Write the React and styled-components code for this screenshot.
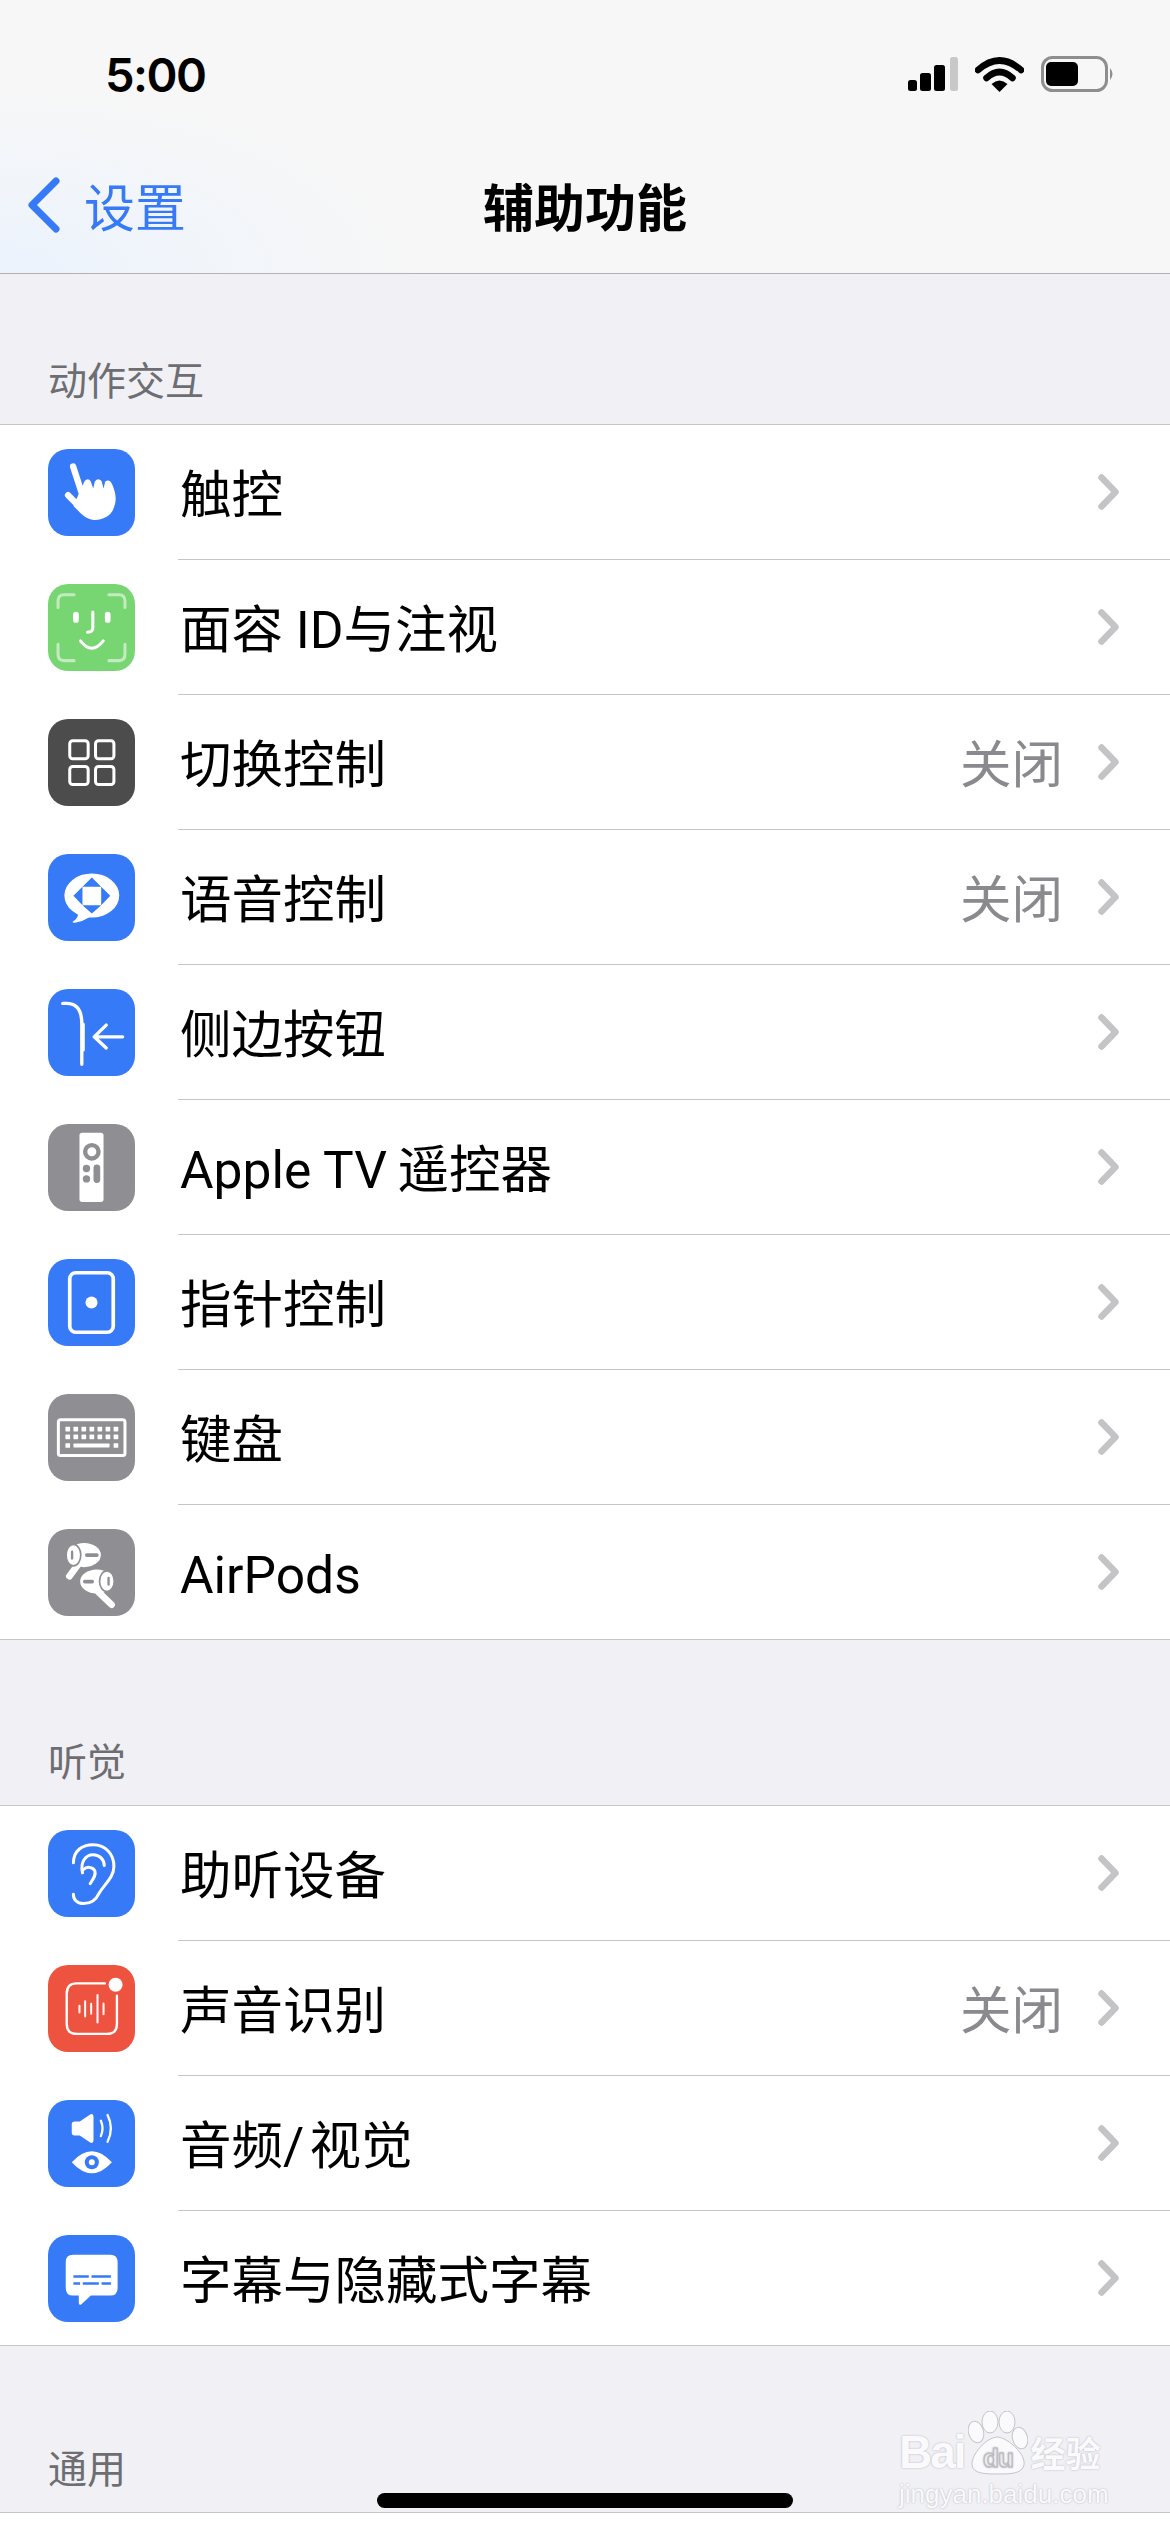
import React from "react";
import styled, { createGlobalStyle } from "styled-components";

const BLUE = "#377af7";
const GRAY = "#8e8e93";

const GlobalStyle = createGlobalStyle`
  html, body {
    margin: 0;
    padding: 0;
    background: #f0f0f5;
  }
  body {
    font-family: Roboto, "Noto Sans CJK SC", sans-serif;
  }
`;

const Page = styled.div`
  position: relative;
  width: 1170px;
  height: 2532px;
  overflow: hidden;
  background: #f0f0f5;
`;

const Header = styled.header`
  height: 273px;
  border-bottom: 1px solid #b2b2b2;
  background: radial-gradient(ellipse 420px 190px at 0 273px, #ecf3fd 0%, rgba(246, 247, 248, 0) 100%), #f7f7f7;
`;

const StatusBar = styled.div`
  height: 148px;
  padding: 0 56px 0 105px;
  display: flex;
  align-items: center;
  justify-content: space-between;
`;

const Time = styled.div`
  font-family: Inter, sans-serif;
  font-size: 47px;
  font-weight: 600;
  color: #000;
  letter-spacing: -1.5px;
`;

const StatusIcons = styled.div`
  display: flex;
  align-items: center;
  gap: 17px;
`;

const NavBar = styled.nav`
  height: 114px;
  display: grid;
  grid-template-columns: 1fr auto 1fr;
  align-items: center;
`;

const BackLink = styled.div`
  margin-left: 27px;
  display: flex;
  align-items: center;
  gap: 24px;
  color: ${BLUE};
  font-size: 51px;
`;

const Title = styled.h1`
  margin: 0;
  font-size: 51px;
  font-weight: 700;
  color: #000;
`;

const SectionHeader = styled.div`
  box-sizing: border-box;
  height: ${(p) => p.$height}px;
  padding: 0 48px 18px;
  display: flex;
  align-items: flex-end;
  font-size: 39px;
  line-height: 48px;
  color: #6d6d72;
`;

const Group = styled.section`
  background: #fff;
  border-top: 1px solid #c6c6c8;
  border-bottom: 1px solid #c6c6c8;
`;

const TailGroup = styled(Group)`
  height: 40px;
`;

const Row = styled.div`
  height: ${(p) => (p.$last ? 134 : 135)}px;
  box-sizing: border-box;
  padding-left: 48px;
  display: flex;
  align-items: center;
  gap: 45px;
`;

const IconTile = styled.div`
  flex: none;
  width: 87px;
  height: 87px;
  border-radius: 20px;
  background: ${(p) => p.$color};
  margin-bottom: ${(p) => (p.$last ? 0 : 1)}px;
  svg {
    display: block;
  }
`;

const RowBody = styled.div`
  flex: 1;
  height: 100%;
  box-sizing: border-box;
  margin-left: -2px;
  padding: 0 51px 0 1px;
  display: flex;
  align-items: center;
  border-bottom: ${(p) => (p.$last ? "none" : "1px solid #c6c6c8")};
`;

const Label = styled.div`
  flex: 1;
  padding: 7px 0 0 1px;
  font-size: 51.5px;
  line-height: 72px;
  color: #000;
  white-space: pre;
`;

const Value = styled.div`
  padding-top: 7px;
  font-size: 51.5px;
  line-height: 72px;
  color: #8a8a8e;
  margin-right: 35px;
`;

const HomeBar = styled.div`
  position: absolute;
  left: 377px;
  top: 2493px;
  width: 416px;
  height: 15px;
  border-radius: 8px;
  background: #000;
`;

const Watermark = styled.div`
  position: absolute;
  left: 899px;
  top: 2407px;
  width: 210px;
  color: #fafafc;
  text-shadow: 0 0 2px #aeaeb6;
`;

const MarkTop = styled.div`
  display: flex;
  align-items: flex-end;
  gap: 3px;
  height: 68px;
  font-family: "Liberation Sans", sans-serif;
  font-weight: 700;
  font-size: 46px;
  line-height: 46px;
  letter-spacing: -2px;
`;

const MarkCn = styled.span`
  font-family: "Noto Sans CJK SC", sans-serif;
  font-size: 35px;
  line-height: 46px;
  letter-spacing: 0;
`;

const MarkUrl = styled.div`
  margin-top: 4px;
  font-family: "Liberation Sans", sans-serif;
  font-size: 26px;
  line-height: 30px;
  white-space: nowrap;
`;

const W = { fill: "none", stroke: "#fff", strokeLinecap: "round", strokeLinejoin: "round" };

const Tile = ({ children }) => (
  <svg width="87" height="87" viewBox="0 0 260 260">
    {children}
  </svg>
);

const TouchIcon = () => (
  <Tile>
    <path d="M75 52L102 135" {...W} strokeWidth="19" />
    <path d="M60 138L102 180" {...W} strokeWidth="19" />
    <path
      fill="#fff"
      d="M96 125L110 95Q120 85 128 97L135 118L140 97Q150 85 160 96L166 118L171 97Q184 88 192 106C202 130 206 150 198 172C190 200 165 212 140 212C115 212 100 195 76 170Z"
    />
  </Tile>
);

const FaceIcon = () => (
  <Tile>
    <path
      d="M30 70V50Q30 32 48 32H78M182 32H212Q230 32 230 50V70M30 180V210Q30 229 48 229H78M182 229H212Q230 229 230 210V180"
      fill="none"
      stroke="#fff"
      strokeOpacity=".55"
      strokeWidth="9"
      strokeLinecap="round"
    />
    <rect x="75" y="83" width="17" height="33" rx="8.5" fill="#fff" />
    <rect x="170" y="83" width="17" height="33" rx="8.5" fill="#fff" />
    <path d="M134 84V130Q134 144 118 144" {...W} strokeWidth="9" />
    <path d="M97 170Q131 214 165 170" {...W} strokeWidth="9" />
  </Tile>
);

const SwitchIcon = () => (
  <Tile>
    <g fill="none" stroke="#fff" strokeWidth="9">
      <rect x="65" y="65" width="55" height="54" rx="9" />
      <rect x="142" y="65" width="55" height="54" rx="9" />
      <rect x="65" y="142" width="55" height="54" rx="9" />
      <rect x="142" y="142" width="55" height="54" rx="9" />
    </g>
  </Tile>
);

const VoiceIcon = () => (
  <Tile>
    <ellipse cx="131" cy="124" rx="82" ry="66" fill="#fff" />
    <path d="M90 175Q90 195 74 202Q72 207 84 205Q104 201 125 188Z" fill="#fff" />
    <path
      d="M131 70L159 98H103ZM76 125L103 98V153ZM186 125L159 98V153ZM131 178L103 153H159Z"
      fill={BLUE}
    />
  </Tile>
);

const SideIcon = () => (
  <Tile>
    <path d="M44 43H55Q101 43 101 103V225" {...W} strokeWidth="10" />
    <path d="M105 105V182" {...W} strokeWidth="10" />
    <path d="M223 143H138M174 108L138 143L174 176" {...W} strokeWidth="10" />
  </Tile>
);

const RemoteIcon = () => (
  <Tile>
    <rect x="94" y="26" width="72" height="207" rx="8" fill="#fff" />
    <circle cx="131" cy="83" r="20" fill="none" stroke={GRAY} strokeWidth="13" />
    <circle cx="115" cy="133" r="11" fill={GRAY} />
    <circle cx="115" cy="164" r="11" fill={GRAY} />
    <rect x="136" y="121" width="20" height="55" rx="10" fill={GRAY} />
  </Tile>
);

const PointerIcon = () => (
  <Tile>
    <rect x="65" y="41" width="130" height="178" rx="18" fill="none" stroke="#fff" strokeWidth="11" />
    <circle cx="130" cy="130" r="18" fill="#fff" />
  </Tile>
);

const KeyboardIcon = () => {
  const xs = [59, 83, 107, 131, 155, 179, 203];
  return (
    <Tile>
      <rect x="31" y="77" width="199" height="107" rx="7" fill="none" stroke="#fff" strokeWidth="9" />
      {xs.map((x) => (
        <rect key={`a${x}`} x={x - 7} y="98" width="14" height="14" rx="2" fill="#fff" />
      ))}
      {xs.map((x) => (
        <rect key={`b${x}`} x={x - 7} y="121" width="14" height="14" rx="2" fill="#fff" />
      ))}
      <rect x="52" y="147" width="14" height="14" rx="2" fill="#fff" />
      <rect x="76" y="148" width="108" height="12" rx="2" fill="#fff" />
      <rect x="196" y="147" width="14" height="14" rx="2" fill="#fff" />
    </Tile>
  );
};

const AirPodsIcon = () => (
  <Tile>
    <path d="M96 98L64 141" {...W} strokeWidth="20" />
    <path d="M150 188L190 226" {...W} strokeWidth="20" />
    <ellipse cx="108" cy="78" rx="50" ry="36" fill="#fff" />
    <ellipse cx="146" cy="157" rx="50" ry="36" fill="#fff" />
    <ellipse cx="76" cy="78" rx="22" ry="32" fill="#fff" stroke={GRAY} strokeWidth="5" />
    <ellipse cx="176" cy="156" rx="22" ry="31" fill="#fff" stroke={GRAY} strokeWidth="5" />
    <path d="M116 78H146M110 157H132" stroke={GRAY} strokeWidth="11" strokeLinecap="round" />
    <path d="M72 68V88M181 146V166" stroke={GRAY} strokeWidth="7" strokeLinecap="round" />
  </Tile>
);

const EarIcon = () => (
  <Tile>
    <path
      d="M76 98C76 62 102 44 135 44C172 44 197 72 197 108C197 142 170 160 152 190C142 212 126 220 106 220C86 220 75 206 76 192"
      {...W}
      strokeWidth="9"
    />
    <path d="M103 128C96 96 112 74 135 74C154 74 168 88 168 106" {...W} strokeWidth="9" />
    <path d="M106 118C116 108 134 110 140 122C144 134 136 146 126 160" {...W} strokeWidth="9" />
  </Tile>
);

const SoundIcon = () => (
  <Tile>
    <path d="M170 55H86Q56 55 56 85V176Q56 206 86 206H176Q206 206 206 176V92" {...W} strokeWidth="7" />
    <circle cx="202" cy="59" r="21" fill="#fff" />
    <path d="M94 122V142M111 108V154M129 116V146M148 90V172M166 115V147" {...W} strokeWidth="6" />
  </Tile>
);

const AudioIcon = () => (
  <Tile>
    <path
      d="M71 72Q71 64 80 64H95L126 43Q136 38 136 50V120Q136 132 126 127L95 106H80Q71 106 71 98Z"
      fill="#fff"
    />
    <path d="M158 62Q168 85 158 108M178 45Q198 85 178 125" {...W} strokeWidth="7" />
    <path d="M71 186Q131 120 191 186Q131 252 71 186Z" fill="#fff" />
    <circle cx="131" cy="186" r="21" fill="#377af7" />
    <circle cx="131" cy="186" r="9" fill="#fff" />
  </Tile>
);

const CaptionIcon = () => (
  <Tile>
    <path
      d="M75 59H186Q208 59 208 81V159Q208 181 186 181H128L100 207Q92 212 92 202V181H75Q53 181 53 159V81Q53 59 75 59Z"
      fill="#fff"
    />
    <path d="M76 124H122M130 124H188M76 145H96M104 145H152M160 145H188" stroke={BLUE} strokeWidth="8" />
  </Tile>
);

const Chevron = () => (
  <svg width="21" height="36" viewBox="0 0 21 36">
    <path d="M3.5 3.5L17.5 18L3.5 32.5" fill="none" stroke="#c4c4c6" strokeWidth="6.5" strokeLinecap="round" strokeLinejoin="round" />
  </svg>
);

const SignalIcon = () => (
  <svg width="50" height="34" viewBox="0 0 50 34">
    <rect x="0" y="23" width="9" height="11" rx="2.5" fill="#000" />
    <rect x="12" y="16" width="11" height="18" rx="2.5" fill="#000" />
    <rect x="26" y="8" width="11" height="26" rx="2.5" fill="#000" />
    <rect x="42" y="0" width="8" height="34" rx="2.5" fill="#c8c8c8" />
  </svg>
);

const WifiIcon = () => (
  <svg width="49" height="35" viewBox="0 0 49 35">
    <path d="M3 13Q24.5 -6 46 13" fill="none" stroke="#000" strokeWidth="6.5" strokeLinecap="round" />
    <path d="M11.5 21Q24.5 9 37.5 21" fill="none" stroke="#000" strokeWidth="6.5" strokeLinecap="round" />
    <path d="M16.5 27Q24.5 20 32.5 27L24.5 35Z" fill="#000" />
  </svg>
);

const BatteryIcon = () => (
  <svg width="73" height="36" viewBox="0 0 73 36">
    <rect x="1.5" y="1.5" width="64" height="33" rx="10" fill="none" stroke="#8e8e8e" strokeWidth="3" />
    <rect x="5" y="6" width="32" height="24" rx="5" fill="#000" />
    <path d="M69 12Q74 18 69 24Z" fill="#8e8e8e" />
  </svg>
);

const BackChevron = () => (
  <svg width="33" height="56" viewBox="0 0 33 56">
    <path d="M29 4L5 28L29 52" fill="none" stroke={BLUE} strokeWidth="7" strokeLinecap="round" strokeLinejoin="round" />
  </svg>
);

const PawMark = () => (
  <svg width="60" height="64" viewBox="0 0 60 64">
    <g fill="#fafafc" stroke="#c4c4ca" strokeWidth="1">
      <ellipse cx="8" cy="21" rx="7.5" ry="11" transform="rotate(-15 8 21)" />
      <ellipse cx="22" cy="11" rx="8" ry="11" />
      <ellipse cx="39" cy="11" rx="8" ry="11" />
      <ellipse cx="52" cy="27" rx="7.5" ry="11" transform="rotate(-15 52 27)" />
      <path d="M30 26C42 28 58 44 56 54C54 63 42 63 30 63C18 63 5 63 4 54C3 44 18 26 30 26Z" />
    </g>
    <text
      x="30"
      y="56"
      textAnchor="middle"
      fontFamily="Liberation Sans, sans-serif"
      fontSize="26"
      fill="#fafafc"
      stroke="#b9b9c0"
      strokeWidth="1"
      letterSpacing="-1"
    >
      du
    </text>
  </svg>
);

const motorRows = [
  { label: "触控", color: BLUE, icon: <TouchIcon /> },
  { label: "面容 ID与注视", color: "#78d672", icon: <FaceIcon /> },
  { label: "切换控制", value: "关闭", color: "#4c4c4c", icon: <SwitchIcon /> },
  { label: "语音控制", value: "关闭", color: BLUE, icon: <VoiceIcon /> },
  { label: "侧边按钮", color: BLUE, icon: <SideIcon /> },
  { label: "Apple TV\u2009遥控器", color: GRAY, icon: <RemoteIcon /> },
  { label: "指针控制", color: BLUE, icon: <PointerIcon /> },
  { label: "键盘", color: GRAY, icon: <KeyboardIcon /> },
  { label: "AirPods", color: GRAY, icon: <AirPodsIcon /> },
];

const hearingRows = [
  { label: "助听设备", color: BLUE, icon: <EarIcon /> },
  { label: "声音识别", value: "关闭", color: "#ee5340", icon: <SoundIcon /> },
  { label: "音频/\u200a视觉", color: BLUE, icon: <AudioIcon /> },
  { label: "字幕与隐藏式字幕", color: BLUE, icon: <CaptionIcon /> },
];

const SettingsGroup = ({ rows }) => (
  <Group>
    {rows.map((row, i) => {
      const last = i === rows.length - 1;
      return (
        <Row key={row.label} $last={last}>
          <IconTile $color={row.color} $last={last}>
            {row.icon}
          </IconTile>
          <RowBody $last={last}>
            <Label>{row.label}</Label>
            {row.value && <Value>{row.value}</Value>}
            <Chevron />
          </RowBody>
        </Row>
      );
    })}
  </Group>
);

export default function App() {
  return (
    <Page>
      <GlobalStyle />
      <Header>
        <StatusBar>
          <Time>5:00</Time>
          <StatusIcons>
            <SignalIcon />
            <WifiIcon />
            <BatteryIcon />
          </StatusIcons>
        </StatusBar>
        <NavBar>
          <BackLink>
            <BackChevron />
            设置
          </BackLink>
          <Title>辅助功能</Title>
        </NavBar>
      </Header>
      <SectionHeader $height={150}>动作交互</SectionHeader>
      <SettingsGroup rows={motorRows} />
      <SectionHeader $height={165}>听觉</SectionHeader>
      <SettingsGroup rows={hearingRows} />
      <SectionHeader $height={166}>通用</SectionHeader>
      <TailGroup />
      <HomeBar />
      <Watermark>
        <MarkTop>
          Bai
          <PawMark />
          <MarkCn>经验</MarkCn>
        </MarkTop>
        <MarkUrl>jingyan.baidu.com</MarkUrl>
      </Watermark>
    </Page>
  );
}
